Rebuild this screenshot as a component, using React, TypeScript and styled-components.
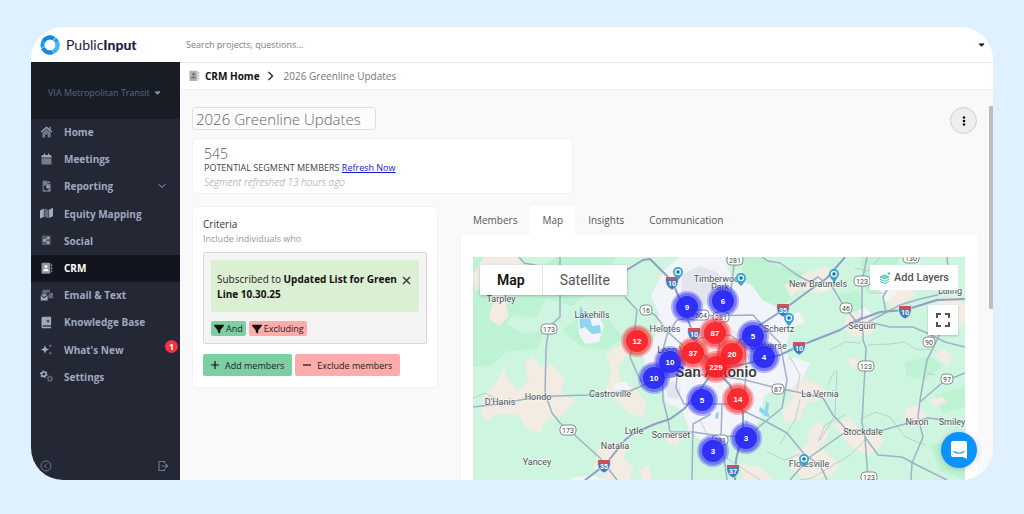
import React from "react";
import styled, { createGlobalStyle, css } from "styled-components";
import { FaFilter, FaCaretDown } from "react-icons/fa6";
import { FiChevronDown } from "react-icons/fi";

const GlobalStyle = createGlobalStyle`
  *, *::before, *::after { box-sizing: border-box; }
  body { margin: 0; background: #dff0ff; }
  body, button, input { font-family: "Open Sans", "Noto Sans", sans-serif; }
  button { border: 0; padding: 0; background: none; cursor: pointer; color: inherit; }
  ul, ol, p, h1, h2 { margin: 0; padding: 0; list-style: none; font-weight: 400; }
  svg { display: block; flex: none; }
`;

const Page = styled.div`
  height: 100vh;
  padding: 27px 31px 34px;
`;

const Window = styled.div`
  position: relative;
  display: flex;
  flex-direction: column;
  height: 100%;
  overflow: hidden;
  border-radius: 32px;
  background: #fff;
`;

const Header = styled.header`
  display: flex;
  align-items: center;
  flex: none;
  height: 35px;
  padding-right: 7px;
`;

const Brand = styled.a`
  display: flex;
  align-items: center;
  gap: 6px;
  width: 149px;
  padding-left: 9px;
  color: #1c1b45;
  font: 400 14px/20px Lato, sans-serif;
  text-decoration: none;
  b { font-weight: 900; }
`;

const Search = styled.input`
  flex: 1;
  min-width: 0;
  padding: 0 6px;
  border: 0;
  outline: 0;
  background: none;
  font-size: 9px;
  line-height: 16px;
  &::placeholder { color: #808080; opacity: 1; }
`;

const UserMenu = styled.button`
  color: #222;
  font-size: 9px;
`;

const Body = styled.div`
  display: flex;
  flex: 1;
  min-height: 0;
`;

const Sidebar = styled.aside`
  display: flex;
  flex-direction: column;
  flex: none;
  width: 149px;
  background: #242835;
  color: #a0a9c0;
`;

const Account = styled.button`
  display: flex;
  align-items: center;
  gap: 3px;
  flex: none;
  height: 57px;
  padding: 4px 0 0 17px;
  background: #181c25;
  color: #5d6585;
  font-size: 9px;
  white-space: nowrap;
  svg { color: #8a90a8; }
`;

const NavList = styled.ul`
  display: grid;
  grid-auto-rows: 1fr;
  flex: none;
  height: 272px;
`;

const NavItem = styled.li<{ $active?: boolean }>`
  position: relative;
  display: flex;
  ${({ $active }) => $active && css`background: #12151e; color: #fff;`}
`;

const NavLink = styled.a`
  display: flex;
  align-items: center;
  flex: 1;
  gap: 11px;
  padding: 0 12px 1px 9px;
  color: inherit;
  font-size: 10px;
  font-weight: 700;
  text-decoration: none;
  span { flex: 1; }
`;

const Badge = styled.span`
  position: absolute;
  top: 3px;
  right: 2px;
  width: 13px;
  height: 13px;
  border-radius: 50%;
  background: #f5333f;
  color: #fff;
  font-size: 9px;
  font-weight: 700;
  line-height: 13px;
  text-align: center;
`;

const SidebarFooter = styled.div`
  display: flex;
  justify-content: space-between;
  margin-top: auto;
  padding: 0 11px 8px 9px;
  color: #6d7590;
`;

const Main = styled.main`
  display: flex;
  flex-direction: column;
  flex: 1;
  min-width: 0;
  background: #f9f9f9;
`;

const Breadcrumb = styled.nav`
  display: flex;
  align-items: center;
  flex: none;
  height: 28px;
  padding-left: 8px;
  border-top: 1px solid #e6e6e6;
  border-bottom: 1px solid #f2f2f2;
  background: #fff;
  color: #777;
  font-size: 10px;
  a { margin: 0 7px 0 5px; color: #111; font-weight: 700; text-decoration: none; }
  span { margin-left: 10px; }
`;

const Content = styled.div`
  display: flex;
  flex-direction: column;
  flex: 1;
  min-height: 0;
  padding: 17px 16px 0 12px;
`;

const TitleRow = styled.div`
  display: flex;
  justify-content: space-between;
  height: 31px;
`;

const TitleInput = styled.input`
  width: 184px;
  height: 23px;
  padding: 0 3px;
  border: 1px solid #e0e0e0;
  border-radius: 3px;
  background: #fcfcfc;
  color: #666;
  font-size: 15px;
  font-weight: 300;
`;

const MoreButton = styled.button`
  display: grid;
  place-items: center;
  width: 27px;
  height: 27px;
  border: 1px solid #cdd1d5;
  border-radius: 50%;
  background: #eceeef;
  color: #111;
`;

const Card = styled.section`
  border: 1px solid #f3f3f3;
  border-radius: 3px;
  background: #fff;
`;

const StatsCard = styled(Card)`
  flex: none;
  width: 381px;
  height: 56px;
  padding: 7px 11px 0;
  color: #444;
  font-size: 9px;
  line-height: 14px;
  a { color: #1616d8; }
`;

const Count = styled.p`
  color: #555;
  font-size: 14px;
  font-weight: 300;
  line-height: 15px;
`;

const Muted = styled.p<{ $italic?: boolean }>`
  color: #999;
  font-size: ${({ $italic }) => ($italic ? 10 : 9)}px;
  font-style: ${({ $italic }) => ($italic ? "italic" : "normal")};
  font-weight: ${({ $italic }) => ($italic ? 300 : 400)};
  line-height: 14px;
`;

const Columns = styled.div`
  display: flex;
  align-items: flex-start;
  flex: 1;
  gap: 22px;
  min-height: 0;
  margin-top: 12px;
`;

const CriteriaCard = styled(Card)`
  flex: none;
  width: 246px;
  padding: 10px 10px 11px;
`;

const CardTitle = styled.h2`
  color: #333;
  font-size: 10px;
  line-height: 15px;
`;

const Group = styled.div`
  margin: 6px 0 10px;
  padding: 7px;
  border: 1px solid #d9d9dc;
  border-radius: 2px;
  background: #f4f4f5;
`;

const Rule = styled.div`
  display: flex;
  align-items: flex-start;
  justify-content: space-between;
  height: 52px;
  margin-bottom: 9px;
  padding: 12px 8px 0 6px;
  border-radius: 2px;
  background: #dbefd2;
  color: #222;
  font-size: 10px;
  line-height: 15px;
  p { flex: 1; }
  button { margin-top: 4px; }
  b { color: #111; }
`;

const ButtonRow = styled.div`
  display: flex;
  gap: 3px;
`;

const Action = styled.button<{ $tone: "add" | "exclude"; $small?: boolean }>`
  display: flex;
  align-items: center;
  gap: ${({ $small }) => ($small ? 2 : 6)}px;
  height: ${({ $small }) => ($small ? 15 : 22)}px;
  padding: 0 ${({ $small }) => ($small ? 3 : 8)}px;
  border-radius: 2px;
  background: ${({ $tone }) => ($tone === "add" ? "#7bcfa2" : "#fdabab")};
  color: #222;
  font-size: 9px;
  white-space: nowrap;
  svg { color: #111; }
`;

const Detail = styled.div`
  display: flex;
  flex-direction: column;
  align-self: stretch;
  flex: 1;
  min-width: 0;
`;

const Tabs = styled.div`
  display: flex;
  flex: none;
  height: 29px;
`;

const Tab = styled.button<{ $active?: boolean }>`
  margin-left: 1px;
  padding: 0 12px 1px;
  border-radius: 3px 3px 0 0;
  background: ${({ $active }) => ($active ? "#fff" : "transparent")};
  color: #555;
  font-size: 10px;
`;

const MapPanel = styled.div`
  display: flex;
  flex: 1;
  min-height: 0;
  padding: 22px 12px 0;
  border-left: 1px solid #f3f3f3;
  background: #fff;
`;

const MapFrame = styled.div`
  position: relative;
  flex: 1;
  overflow: hidden;
  background: #cef5df;
  > svg { width: 100%; height: 100%; }
`;

const MapTypes = styled.div`
  position: absolute;
  top: 8px;
  left: 7px;
  display: flex;
  border-radius: 1px;
  background: #fff;
  box-shadow: 0 1px 3px rgba(0, 0, 0, 0.25);
`;

const MapType = styled.button<{ $active?: boolean }>`
  height: 30px;
  padding: 0 17px;
  color: ${({ $active }) => ($active ? "#111" : "#565656")};
  font-family: Roboto, sans-serif;
  font-size: 14px;
  font-weight: ${({ $active }) => ($active ? 600 : 400)};
  & + & { border-left: 1px solid #e6e6e6; }
`;

const LayersButton = styled.button`
  position: absolute;
  top: 8px;
  right: 7px;
  display: flex;
  align-items: center;
  gap: 3px;
  height: 25px;
  padding: 0 9px;
  background: #fff;
  color: #555;
  font: 500 11px/14px Roboto, sans-serif;
`;

const FullscreenButton = styled.button`
  position: absolute;
  top: 48px;
  right: 7px;
  display: grid;
  place-items: center;
  width: 30px;
  height: 30px;
  background: #fff;
  color: #555;
  box-shadow: 0 1px 2px rgba(0, 0, 0, 0.2);
`;

const ScrollThumb = styled.div`
  position: absolute;
  top: 79px;
  right: 0;
  width: 4px;
  height: 203px;
  background: #bdbdbd;
`;

const ChatButton = styled.button`
  position: absolute;
  right: 16px;
  bottom: 12px;
  display: grid;
  place-items: center;
  width: 36px;
  height: 36px;
  border-radius: 50%;
  background: #0d93f7;
  box-shadow: 0 1px 6px rgba(0, 0, 0, 0.2);
`;

const ICONS: Record<string, React.ReactNode> = {
  home: (
    <>
      <path opacity=".6" d="M3 8.5 8.5 4 14 8.5V15h-4v-4H7v4H3z" />
      <path d="M8.5.8 16 7.2l-1 1.2-6.5-5.4L2 8.4 1 7.2zM12.5 1H14v4l-1.500-1.300z" />
    </>
  ),
  meetings: (
    <>
      <path d="M2 6V4q0-1.500 1.500-1.500H5V.8h1.600v1.700h3.800V.8H12v1.700h1.500Q15 2.500 15 4v2z" />
      <path opacity=".65" d="M2 7h13v7q0 1.200-1.200 1.200H3.200Q2 15.200 2 14z" />
    </>
  ),
  reporting: (
    <>
      <path opacity=".65" fillRule="evenodd" d="M3.500 1H10v4h4v10.500H3.500zM8 6.500a3.600 3.600 0 1 0 3.700 4.500H8z" />
      <path d="M11 1 14 4h-3zM9 6.500A3.500 3.500 0 0 1 12.300 10H9z" />
    </>
  ),
  map: (
    <>
      <path d="M0 4.500 5 2v11l-5 2zM11.500 3.500 17 1v11l-5.500 2.500z" />
      <path opacity=".55" d="m5.800 2 5 1.500v11l-5-1.500z" />
    </>
  ),
  social: (
    <>
      <path opacity=".4" d="M2.500 2H14v12.500H2.500z" />
      <path d="m4 8.200 5.500-3 .6 1.100-3.500 2 3.500 2-.6 1.100z" />
      <circle cx="5.500" cy="8.300" r="1.700" />
      <circle cx="10.800" cy="5.300" r="1.700" />
      <circle cx="10.800" cy="11.300" r="1.700" />
    </>
  ),
  crm: (
    <>
      <path opacity=".55" fillRule="evenodd" d="M3 1h9.500q1 0 1 1v12.500q0 1-1 1H3q-1 0-1-1V2q0-1 1-1zM14.500 3H16v2.500h-1.500zM14.500 7H16v2.500h-1.500zM14.500 11H16v2.500h-1.500z" />
      <circle cx="7.800" cy="6" r="2" />
      <path d="M4.300 12q0-3.200 3.500-3.200t3.500 3.200z" />
    </>
  ),
  email: (
    <>
      <path opacity=".5" d="M4 1h9v3.500H8.500V7H3V2zM13.500 5H17v7h-6V7.500z" />
      <path d="M1 8.500 5.500 12 10 8.500V15H1zM1 7.200h9L5.500 10.600z" />
    </>
  ),
  book: (
    <>
      <path fillRule="evenodd" d="M4 1h10.500v11H4.500q-1 .3-1 1.200t1 1.200h10V16H4q-2 0-2-2V3q0-2 2-2zm6.500 3L9.800 6 8 6.700l1.800.7.700 2 .7-2 1.800-.7-1.800-.7z" />
      <path opacity=".5" d="M4.500 12.700h10v1.200h-10z" />
    </>
  ),
  sparkles: (
    <>
      <path d="M6.500 3 8 7l4 1.500L8 10l-1.500 4L5 10 1 8.500 5 7z" />
      <path opacity=".5" d="m13.500 1 .8 1.900 1.900.8-1.900.8-.8 1.900-.8-1.900-1.900-.8 1.900-.8zM13.500 10.500l.8 1.900 1.900.8-1.900.8-.8 1.900-.8-1.900-1.900-.8 1.900-.8z" />
    </>
  ),
  settings: (
    <>
      <circle cx="5" cy="5.500" r="2.800" fill="none" stroke="currentColor" strokeWidth="2" />
      <circle cx="5" cy="5.500" r="4.200" fill="none" stroke="currentColor" strokeWidth="1.500" strokeDasharray="2.200 2.200" />
      <g opacity=".55" fill="none" stroke="currentColor">
        <circle cx="13" cy="11.500" r="2.500" strokeWidth="1.500" />
        <circle cx="13" cy="11.500" r="3.700" strokeWidth="1.300" strokeDasharray="1.900 1.900" />
      </g>
    </>
  ),
};

const Icon = ({ name, size = 13 }: { name: string; size?: number }) => (
  <svg width={size} height={size} viewBox="0 0 17 17" fill="currentColor" aria-hidden>
    {ICONS[name]}
  </svg>
);

const NAV = [
  { icon: "home", label: "Home" },
  { icon: "meetings", label: "Meetings" },
  { icon: "reporting", label: "Reporting", expandable: true },
  { icon: "map", label: "Equity Mapping" },
  { icon: "social", label: "Social" },
  { icon: "crm", label: "CRM", active: true },
  { icon: "email", label: "Email & Text" },
  { icon: "book", label: "Knowledge Base" },
  { icon: "sparkles", label: "What's New", badge: 1 },
  { icon: "settings", label: "Settings" },
];

const Logo = () => (
  <svg width="20" height="20" viewBox="0 0 20 20" fill="none" strokeWidth="4" aria-hidden>
    <circle cx="10" cy="10" r="7.600" stroke="#1d9bee" />
    <path d="M3.800 5.600A7.600 7.600 0 0 1 13 3" stroke="#0f86e0" />
    <path d="M16.800 6.600A7.600 7.600 0 0 1 15 15.700" stroke="#47b9f7" />
    <path d="M12 17.300A7.600 7.600 0 0 1 3 13" stroke="#1788dd" />
    <path d="m13.500 5.500 2.600-3.700M4.500 11.500l-3.800 2.300M12.500 15l2 3.500" stroke="#fff" strokeWidth=".6" />
  </svg>
);

const MAJOR_ROADS = [
  "M585 480 605 465 625 440 634 433 655 424 670 419 684 409 700 390 714 370 740 340 763 323 783 310 810 290 827 278 845 257",
  "M625 271 643 260 650 259 672 281 680 300 693 333 700 350 714 366",
  "M714 370 745 364 780 355 797 347 807 343 840 330 853 322 880 312 905 310 937 300 965 299",
  "M735 480 736 460 743 430 743 413 730 385 716 370",
];

const ROADS = [
  "M560 257V317L550 326 547 340 546 350 545 393 552 413 560 423 568 429 600 458 617 480",
  "M473 407 500 404 525 399 555 396 588 395 630 391 655 380 680 375 714 375 745 380 777 388 802 393 823 398 833 415 845 428",
  "M519 257 524 263 540 266M625 297 637 310 635 327 630 357 637 373 642 383M646 310 655 315 668 332 690 352",
  "M677 320 700 316 753 315 763 326 780 343 787 380 782 408 760 426 747 437 720 436 693 432 670 432",
  "M677 320 667 335 662 353 663 400 668 420 670 432",
  "M690 345 700 338 730 335 745 345 746 370 744 404 684 404 676 388 678 365Z",
  "M722 403 721 437 725 465 727 480M711 414 693 424 692 480M735 257 731 290 721 320 718 360",
  "M867 257 862 282 862 317 853 324M863 330 863 340 866 348 865 367 862 423 865 437 868 480",
  "M762 257 768 261 780 263 797 275 810 282 818 277 826 283 830 283 845 308 857 322 863 318",
  "M893 280 883 297 886 312M868 322 900 305 920 299 937 295 950 288 947 257",
  "M853 322 873 323 890 327 913 327 927 333 945 342 965 347",
  "M947 317 937 340 927 360 920 400 918 417 923 437 912 463 911 480M920 402 943 382 965 373",
  "M790 480 810 457 848 430 883 430 905 424 928 418 945 420",
  "M865 437 878 455 902 457 917 465 947 480",
  "M737 408 767 422 787 433 805 455 820 465 827 480",
];

const LANES = [
  "M473 398 485 393 498 400M700 420 715 450 760 480M767 452 785 460 800 454M780 444 795 420 800 400",
  "M820 440 835 415 837 370M818 442 825 425 845 415M860 420 875 412 890 417 905 437 925 445",
  "M868 345 890 344 905 342 915 349 935 350M830 350 845 342 860 343M800 480 812 478 850 455 865 440",
  "M880 257 868 271 855 268M935 375 927 373M870 293 885 293M790 357 800 375 797 390M835 370 828 385",
];

const LABELS: [string, number, number][] = [
  ["Tarpley", 501, 302], ["Lakehills", 592, 318], ["Helotes", 665, 332], ["Timberwood", 719, 282],
  ["Park", 720, 290], ["New Braunfels", 818, 287], ["Schertz", 779, 332], ["Converse", 768, 349],
  ["Seguin", 862, 329], ["Luling", 950, 294], ["Hondo", 538, 400], ["D'Hanis", 500, 405],
  ["Castroville", 610, 397], ["Lytle", 634, 434], ["Somerset", 671, 438], ["Natalia", 615, 449],
  ["Yancey", 537, 465], ["Leon Valley", 680, 353], ["La Vernia", 820, 397], ["Stockdale", 863, 435],
  ["Nixon", 917, 425], ["Smiley", 952, 425], ["Floresville", 809, 467],
];

const ROUTES: [string, number, number][] = [
  ["281", 735, 260], ["1604", 699, 315], ["281", 721, 317], ["16", 646, 310], ["173", 549, 329],
  ["173", 568, 430], ["123", 862, 281], ["46", 846, 308], ["130", 911, 258], ["90", 929, 342],
  ["87", 778, 389], ["123", 866, 366], ["97", 947, 379], ["123", 869, 477], ["281", 720, 440],
];

const INTERSTATES: [string, number, number][] = [
  ["10", 672, 283], ["10", 694, 334], ["35", 604, 466], ["37", 733, 471], ["35", 783, 310],
  ["10", 799, 348], ["10", 905, 312],
];

const PINS = [[678, 272], [741, 278], [834, 274], [789, 318], [804, 459]];

const BLUE = "#2424f5";
const RED = "#fa1e24";
const CLUSTERS: [number, number, number, string][] = [
  [9, 687, 307, BLUE], [6, 723, 301, BLUE], [5, 753, 336, BLUE], [4, 764, 357, BLUE],
  [10, 670, 362, BLUE], [10, 654, 378, BLUE], [5, 702, 400, BLUE], [3, 746, 438, BLUE],
  [3, 713, 451, BLUE], [12, 637, 341, RED], [87, 715, 333, RED], [37, 693, 353, RED],
  [229, 716, 367, RED], [20, 732, 354, RED], [14, 738, 399, RED],
];

const RegionMap = () => (
  <svg viewBox="473 257 492 223" preserveAspectRatio="xMidYMid slice" role="img" aria-label="Segment members around San Antonio" fontFamily="Roboto, sans-serif" textAnchor="middle">
    <path fill="#cef5df" d="M473 257h492v223H473z" />
    <g fill="#bdf2d3">
      <path d="M473 257h30l8 15 25-2 20-13h60l-6 18 20 6-12 14-28-3-18 14-25-8-12 20-22-3-18 22-22-6zM473 330l30-8 22 12 20-5-8 20-30 2-15 14-19 2z" />
      <path d="M562 330l22-16 25 6 14 18-18 12-25-4zM740 257h20l18 10 28 5-8 22-22 14-18-8-14-22zM860 257h40l-10 30-24 8z" />
      <path d="M905 362l25-6 12 10-16 14-20-4zM935 395l30-8v20l-22 6zM840 295l18-5 6 18-14 5zM930 445l35-6v40l-25-8z" />
    </g>
    <g fill="#f2ece2" strokeLinejoin="round" stroke="#f2ece2" strokeWidth="1.500" strokeOpacity=".6">
      <path d="M484 257h32l8 8-12 10-16-3-2 14 10 8 4 22-9 10-10-8 5-18-9-12-9 2-3-14z" />
      <path d="M498 380l6-12 5 14 8 8 12-8-4-18 7-8 8 12 12-3 13 14-5 14 14 8-12 14-16 4-6 14-14-6-8-12-20-2-12 8-5-12 4-14z" />
      <path d="M612 350l12-6 4 10-10 12 2 16 18 10 8 12-4 14-14-6-14-14-8-8 6-20-6-12zM598 450l14-8 14 5-2 12 9 8-3 13h-22l-14-12z" />
      <path d="M640 470l8-4 4 14h-10zM787 385l18-6 15 6 8 12-22 6-6 16-14 4-4-12 12-14zM835 425l14-8 12 16 16-2 6 12-14 12-18-8zM795 452l14-8 16 8 14 12-8 12-26 4-14-12zM808 430l12-8 8 12-6 12-12 2z" />
      <path d="M802 275l24-8 14 8-6 14-18 4-14-4zM785 285l14-4 2 8-10 8zM848 315l14-4 14 8-4 14-16 4-12-8zM890 278l18 2 8 14-22 16-8-12zM938 300l18-4 9 8v20l-12 4-14-14z" />
      <path d="M930 400l12-3 5 5-12 4zM905 410l12-5 9 8-5 14-14-4zM740 465l20 2 12 13h-28zM935 355l10-6 8 8-6 8zM668 430l12 4-2 12-12-4zM848 360l8-3 3 8-8 3z" />
    </g>
    <g fill="#f2f4fa">
      <path d="M664 270l16-13h44l8 22 20 6 10 15 22 10 7 18-5 18 3 20-9 20-16 10-4 24-18 20-20-4-16 8-16-12-8-22-16-8-4-22-16-4-3-22 12-16 4-24-8-18z" />
      <path d="M578 318l18-6 8 14-5 16-14 2-6-10zM780 365l14-8 16 6-8 16-12 10-10-6zM810 283l12-5 8 8-8 6zM785 318l14-6 6 10-14 6zM612 385l14-4 5 8-12 4zM880 290l12-6 5 10-12 8zM858 310l8-3 6 8-10 2zM570 478l20-3 18 5h-36z" />
    </g>
    <path fill="#e2e4ee" d="M682 274l18-8 16 6 16 14 3 14-16 10-14-6-16 8-8-16zM665 385l8-4 8 8-3 10-10-2z" />
    <path fill="#f8dedd" opacity=".7" d="M695 330l30-8 18 16 4 28-14 14-26-6-12-14z" />
    <g fill="#8fd5ed">
      <path d="M581 305l3 10 6 2 2 9 8-1 1 8-9 1-7-7-5 2-1-14zM760 407l5 3 1-8 3 1-1 9 2 5-5-1-6-5zM716 413l3-1-1 7-3-1zM744 420l5 1-3 5z" />
    </g>
    <g fill="none" strokeLinejoin="round">
      <g stroke="#b6c4cf" strokeWidth=".8">{LANES.map((d) => <path key={d} d={d} />)}</g>
      <g stroke="#a0b0c8" strokeWidth="1.500">{ROADS.map((d) => <path key={d} d={d} />)}</g>
      <g stroke="#919fc3" strokeWidth="2">{MAJOR_ROADS.map((d) => <path key={d} d={d} />)}</g>
    </g>
    <g fontSize="7" fill="#444">
      {ROUTES.map(([n, x, y]) => {
        const w = n.length * 4 + 4;
        return (
          <g key={`${n}-${x}`}>
            <rect x={x - w / 2} y={y - 5} width={w} height="10" rx="4" fill="#fff" stroke="#7c8486" strokeWidth=".9" />
            <text x={x} y={y + 3}>{n}</text>
          </g>
        );
      })}
    </g>
    <g fontSize="7" fontWeight="700" fill="#fff">
      {INTERSTATES.map(([n, x, y]) => (
        <g key={`${n}-${x}`}>
          <path d={`M${x - 6} ${y - 6}h12q2 9-6 13q-8-4-6-13z`} fill="#3f7cbf" stroke="#e7edf5" strokeWidth=".7" />
          <path d={`M${x - 6} ${y - 6}h12v3h-12z`} fill="#c9525c" />
          <text x={x} y={y + 3}>{n}</text>
        </g>
      ))}
    </g>
    <g fontSize="9" fill="#4b5355" stroke="#fff" strokeOpacity=".6" strokeWidth="1.500" paintOrder="stroke">
      {LABELS.map(([name, x, y]) => <text key={name} x={x} y={y}>{name}</text>)}
      <text x="716" y="377" fontSize="15" fontWeight="500" fill="#333">San Antonio</text>
    </g>
    {PINS.map(([x, y]) => (
      <g key={x}>
        <path d={`M${x} ${y + 8}q-5-5-5-8a5 5 0 0 1 10 0q0 3-5 8z`} fill="#36a1cf" />
        <circle cx={x} cy={y} r="3.300" fill="#d6f1fa" />
        <circle cx={x} cy={y} r="1.700" fill="#1d6f98" />
      </g>
    ))}
    {CLUSTERS.map(([count, x, y, color]) => (
      <g key={`${x}-${y}`}>
        <circle cx={x} cy={y} r="16" fill={color} opacity=".3" />
        <circle cx={x} cy={y} r="14" fill={color} opacity=".4" />
        <circle cx={x} cy={y} r="11" fill={color} opacity=".85" />
        <text x={x} y={y + 3} fontSize="8" fontWeight="700" fill="#fff" fontFamily="Liberation Sans, sans-serif">{count}</text>
      </g>
    ))}
  </svg>
);

export default function App() {
  return (
    <Page>
      <GlobalStyle />
      <Window>
        <Header>
          <Brand href="#" aria-label="PublicInput">
            <Logo />
            <span>Public<b>Input</b></span>
          </Brand>
          <Search aria-label="Search" placeholder="Search projects, questions..." />
          <UserMenu aria-label="User menu"><FaCaretDown /></UserMenu>
        </Header>
        <Body>
          <Sidebar>
            <Account>VIA Metropolitan Transit <FaCaretDown /></Account>
            <NavList>
              {NAV.map(({ icon, label, active, expandable, badge }) => (
                <NavItem key={label} $active={active}>
                  <NavLink href="#" aria-current={active ? "page" : undefined}>
                    <Icon name={icon} />
                    <span>{label}</span>
                    {expandable && <FiChevronDown size={12} />}
                  </NavLink>
                  {badge && <Badge>{badge}</Badge>}
                </NavItem>
              ))}
            </NavList>
            <SidebarFooter>
              <button aria-label="Collapse sidebar">
                <svg width="12" height="12" viewBox="0 0 12 12" fill="none" stroke="currentColor">
                  <circle cx="6" cy="6" r="5" />
                  <path d="M7 3.500 4.500 6 7 8.500" />
                </svg>
              </button>
              <button aria-label="Sign out">
                <svg width="12" height="12" viewBox="0 0 12 12" fill="none" stroke="currentColor" strokeWidth="1.200">
                  <path d="M7.500 3.500V1.500H2v9h5.500v-2M4.500 6h6M8.500 4l2.200 2-2.200 2" />
                </svg>
              </button>
            </SidebarFooter>
          </Sidebar>
          <Main>
            <Breadcrumb aria-label="Breadcrumb">
              <Icon name="crm" size={12} />
              <a href="#">CRM Home</a>
              <svg width="7" height="10" viewBox="0 0 7 10" fill="none" stroke="#333" strokeWidth="1.500" aria-hidden>
                <path d="m1.500 1 4 4-4 4" />
              </svg>
              <span>2026 Greenline Updates</span>
            </Breadcrumb>
            <Content>
              <TitleRow>
                <TitleInput aria-label="Segment name" defaultValue="2026 Greenline Updates" />
                <MoreButton aria-label="More options">
                  <svg width="4" height="12" viewBox="0 0 4 12" fill="currentColor">
                    <circle cx="2" cy="2.500" r="1.300" />
                    <circle cx="2" cy="6" r="1.300" />
                    <circle cx="2" cy="9.500" r="1.300" />
                  </svg>
                </MoreButton>
              </TitleRow>
              <StatsCard>
                <Count>545</Count>
                <p>POTENTIAL SEGMENT MEMBERS <a href="#">Refresh Now</a></p>
                <Muted $italic>Segment refreshed 13 hours ago</Muted>
              </StatsCard>
              <Columns>
                <CriteriaCard>
                  <CardTitle>Criteria</CardTitle>
                  <Muted>Include individuals who</Muted>
                  <Group>
                    <Rule>
                      <p>Subscribed to <b>Updated List for Green Line 10.30.25</b></p>
                      <button aria-label="Remove rule">
                        <svg width="9" height="9" viewBox="0 0 9 9" fill="none" stroke="#333" strokeWidth="1.300">
                          <path d="m1 1 7 7M8 1 1 8" />
                        </svg>
                      </button>
                    </Rule>
                    <ButtonRow>
                      <Action $tone="add" $small><FaFilter size={10} />And</Action>
                      <Action $tone="exclude" $small><FaFilter size={10} />Excluding</Action>
                    </ButtonRow>
                  </Group>
                  <ButtonRow>
                    <Action $tone="add">
                      <svg width="8" height="8" viewBox="0 0 8 8" stroke="currentColor" strokeWidth="1.200"><path d="M4 0v8M0 4h8" /></svg>
                      Add members
                    </Action>
                    <Action $tone="exclude">
                      <svg width="8" height="8" viewBox="0 0 8 8" stroke="currentColor" strokeWidth="1.200"><path d="M0 4h8" /></svg>
                      Exclude members
                    </Action>
                  </ButtonRow>
                </CriteriaCard>
                <Detail>
                  <Tabs role="tablist">
                    {["Members", "Map", "Insights", "Communication"].map((name) => (
                      <Tab key={name} role="tab" aria-selected={name === "Map"} $active={name === "Map"}>{name}</Tab>
                    ))}
                  </Tabs>
                  <MapPanel role="tabpanel">
                    <MapFrame>
                      <RegionMap />
                      <MapTypes>
                        <MapType $active>Map</MapType>
                        <MapType>Satellite</MapType>
                      </MapTypes>
                      <LayersButton>
                        <svg width="12" height="12" viewBox="0 0 12 12" fill="none" stroke="#3fc1bd" aria-hidden>
                          <path d="m1 5 4.500-2L10 5 5.500 7z" fill="#7ed9d5" />
                          <path d="m1 7.300 4.500 2 4.500-2M1 9.500l4.500 2 4.500-2M10 0v3M8.500 1.500h3" />
                        </svg>
                        Add Layers
                      </LayersButton>
                      <FullscreenButton aria-label="Full screen">
                        <svg width="14" height="14" viewBox="0 0 14 14" fill="none" stroke="currentColor" strokeWidth="2">
                          <path d="M1 5V1h4M9 1h4v4M13 9v4H9M5 13H1V9" />
                        </svg>
                      </FullscreenButton>
                    </MapFrame>
                  </MapPanel>
                </Detail>
              </Columns>
            </Content>
          </Main>
        </Body>
        <ScrollThumb aria-hidden />
        <ChatButton aria-label="Open chat">
          <svg width="16" height="18" viewBox="0 0 16 18">
            <path d="M2 0h12q2 0 2 2v16l-4-2H2q-2 0-2-2V2q0-2 2-2z" fill="#fff" />
            <path d="M3 10.500q5 3.500 10 0" fill="none" stroke="#0d93f7" strokeWidth="1.200" strokeLinecap="round" />
          </svg>
        </ChatButton>
      </Window>
    </Page>
  );
}
